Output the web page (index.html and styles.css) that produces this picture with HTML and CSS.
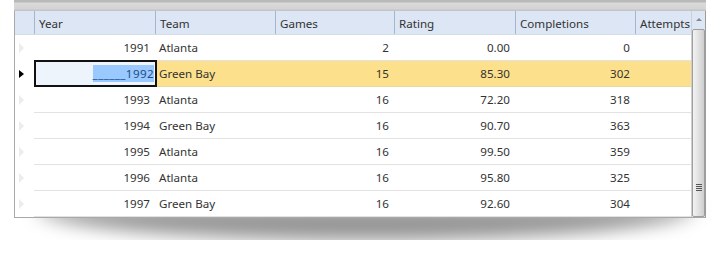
FILE: index.html
```html
<!DOCTYPE html>
<html lang="en">
<head>
    <meta charset="UTF-8">
    <meta name="viewport" content="width=device-width, initial-scale=1.0">
    <link rel="stylesheet" href="styles.css">
    <title>Grid</title>
</head>
<body>
    <div class="grid">
        <div class="topbar"></div>
        <div class="main">
            <div class="view">
                <div class="head">
                    <div class="ind"></div>
                    <div class="hc c1">Year</div>
                    <div class="hc c2">Team</div>
                    <div class="hc c3">Games</div>
                    <div class="hc c4">Rating</div>
                    <div class="hc c5">Completions</div>
                    <div class="hc c6">Attempts</div>
                </div>
                <div class="row">
                    <div class="ind"><span class="tri"></span></div>
                    <div class="cells">
                        <div class="c c1 num">1991</div>
                        <div class="c c2">Atlanta</div>
                        <div class="c c3 num">2</div>
                        <div class="c c4 num">0.00</div>
                        <div class="c c5 num">0</div>
                        <div class="c c6"></div>
                    </div>
                </div>
                <div class="row current">
                    <div class="ind"><span class="tri on"></span></div>
                    <div class="cells">
                        <div class="c c1 num editor"><span class="sel">______1992</span></div>
                        <div class="c c2">Green Bay</div>
                        <div class="c c3 num">15</div>
                        <div class="c c4 num">85.30</div>
                        <div class="c c5 num">302</div>
                        <div class="c c6"></div>
                    </div>
                </div>
                <div class="row">
                    <div class="ind"><span class="tri"></span></div>
                    <div class="cells">
                        <div class="c c1 num">1993</div>
                        <div class="c c2">Atlanta</div>
                        <div class="c c3 num">16</div>
                        <div class="c c4 num">72.20</div>
                        <div class="c c5 num">318</div>
                        <div class="c c6"></div>
                    </div>
                </div>
                <div class="row">
                    <div class="ind"><span class="tri"></span></div>
                    <div class="cells">
                        <div class="c c1 num">1994</div>
                        <div class="c c2">Green Bay</div>
                        <div class="c c3 num">16</div>
                        <div class="c c4 num">90.70</div>
                        <div class="c c5 num">363</div>
                        <div class="c c6"></div>
                    </div>
                </div>
                <div class="row">
                    <div class="ind"><span class="tri"></span></div>
                    <div class="cells">
                        <div class="c c1 num">1995</div>
                        <div class="c c2">Atlanta</div>
                        <div class="c c3 num">16</div>
                        <div class="c c4 num">99.50</div>
                        <div class="c c5 num">359</div>
                        <div class="c c6"></div>
                    </div>
                </div>
                <div class="row">
                    <div class="ind"><span class="tri"></span></div>
                    <div class="cells">
                        <div class="c c1 num">1996</div>
                        <div class="c c2">Atlanta</div>
                        <div class="c c3 num">16</div>
                        <div class="c c4 num">95.80</div>
                        <div class="c c5 num">325</div>
                        <div class="c c6"></div>
                    </div>
                </div>
                <div class="row">
                    <div class="ind"><span class="tri"></span></div>
                    <div class="cells">
                        <div class="c c1 num">1997</div>
                        <div class="c c2">Green Bay</div>
                        <div class="c c3 num">16</div>
                        <div class="c c4 num">92.60</div>
                        <div class="c c5 num">304</div>
                        <div class="c c6"></div>
                    </div>
                </div>
            </div>
            <div class="scroll">
                <div class="arrow"></div>
                <div class="thumb"><span class="grip"></span></div>
            </div>
        </div>
    </div>
    <div class="shadow"></div>
</body>
</html>
```

FILE: styles.css
```css
*{
    box-sizing: border-box;
}
body{
    margin: 0;
    padding: 0 0 0 14px;
    background: #fff;
    font-family: "Noto Sans", "Open Sans", sans-serif;
    font-size: 11.6px;
    color: #333;
}
.grid{
    position: relative;
    z-index: 1;
    width: 692px;
    border-left: 1px solid #a9a9a9;
    border-right: 1px solid #9c9c9c;
    border-bottom: 1px solid #a9a9a9;
    background: #fff;
}
.shadow{
    width: 660px;
    height: 32px;
    margin: -10px 0 0 22px;
    background: rgba(0, 0, 0, 0.42);
    border-radius: 0 0 50% 50% / 0 0 100% 100%;
    filter: blur(9px);
}
.topbar{
    height: 11px;
    background: linear-gradient(#b9b9b9 0, #b9b9b9 2px, #dadada 3px, #d4d4d4 9px, #c4c4c4 10px);
    margin-left: -1px;
    margin-right: -1px;
}
.main{
    display: flex;
}
.view{
    width: 676px;
    overflow: hidden;
}
.head{
    display: flex;
    height: 24px;
    background: #dce6f4;
    border-bottom: 1px solid #d2dbe8;
}
.head .ind{
    width: 19px;
}
.hc{
    border-left: 1px solid #a5b5cb;
    padding: 4px 4px 0;
    line-height: 17px;
    white-space: nowrap;
    overflow: hidden;
}
.c1{ width: 121px; flex: none; }
.c2{ width: 120px; flex: none; }
.c3{ width: 119px; flex: none; }
.c4{ width: 121px; flex: none; }
.c5{ width: 120px; flex: none; }
.c6{ width: 56px; flex: none; }
.row{
    display: flex;
    height: 26px;
}
.ind{
    width: 19px;
    flex: none;
    display: flex;
    align-items: center;
    padding-left: 4px;
}
.tri{
    width: 0;
    height: 0;
    border-top: 5px solid transparent;
    border-bottom: 5px solid transparent;
    border-left: 5px solid #ececec;
}
.tri.on{
    border-top-width: 4px;
    border-bottom-width: 4px;
    border-left-color: #000;
}
.cells{
    display: flex;
    border-bottom: 1px solid #e2e2e2;
    flex: 1;
}
.c{
    padding: 0 5px 0 4px;
    line-height: 25px;
    white-space: nowrap;
}
.num{
    text-align: right;
}
.current .cells{
    background: #fde08b;
    border-bottom-color: #e8d7a5;
}
.editor{
    background: #eef4fb;
    border: 2px solid #111;
    margin-top: -1px;
    height: 27px;
    width: 123px;
    margin-right: -2px;
    line-height: 23px;
    padding-right: 1px;
    position: relative;
}
.sel{
    background: #99c9ff;
    color: #1f4d86;
    padding: 1px 0;
    letter-spacing: 0.4px;
}
.scroll{
    width: 14px;
    flex: none;
    display: flex;
    flex-direction: column;
    background: #e6e6e6;
    border-left: 1px solid #cfcfcf;
}
.arrow{
    height: 18px;
    background: #dce6f4;
    display: flex;
    justify-content: center;
    padding-top: 7px;
}
.arrow::before{
    content: "";
    width: 0;
    height: 0;
    border-left: 3px solid transparent;
    border-right: 3px solid transparent;
    border-bottom: 3px solid #888;
}
.thumb{
    flex: 1;
    border: 1px solid #9e9e9e;
    border-radius: 2px;
    background: linear-gradient(90deg, #f3f3f3, #e1e1e1 50%, #cfcfcf);
    display: flex;
    align-items: flex-end;
    justify-content: center;
    padding-bottom: 25px;
}
.grip{
    width: 6px;
    height: 7px;
    background: repeating-linear-gradient(#555 0, #555 1px, transparent 1px, transparent 2px);
}
```
